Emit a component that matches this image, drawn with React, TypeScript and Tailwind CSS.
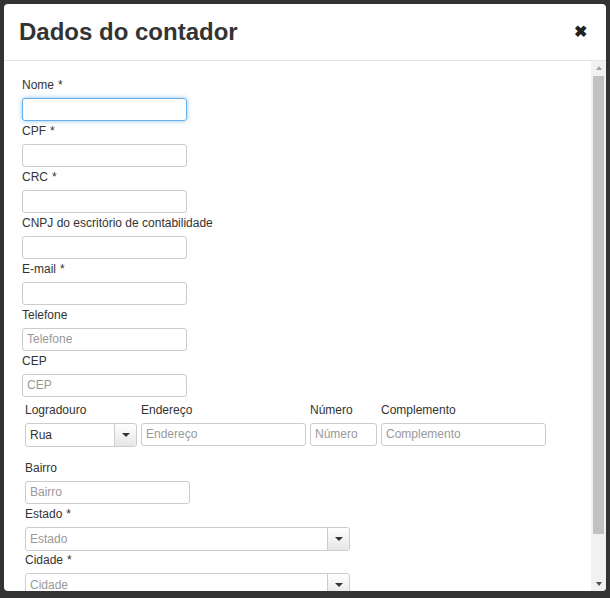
const font = { fontFamily: '"Liberation Sans", Arial, sans-serif' }

function Label({ text, req }: { text: string; req?: boolean }) {
  return (
    <div className="h-[23px] pt-[3px] text-[12px] leading-[14px] text-[#333]">
      {text}
      {req && <span className="ml-[4px]">*</span>}
    </div>
  )
}

function Input({ ph, w = 'w-[165px]', focus }: { ph?: string; w?: string; focus?: boolean }) {
  return (
    <div
      className={`h-[23px] ${w} rounded-[3px] border bg-white px-[4px] text-[12px] leading-[21px] text-[#999] ${
        focus ? 'border-[#66afe9] shadow-[0_0_5px_rgba(102,175,233,0.7)]' : 'border-[#ccc]'
      }`}
    >
      {ph}
    </div>
  )
}

function Caret() {
  return <div className="h-0 w-0 border-x-[4px] border-t-[4px] border-x-transparent border-t-[#333]" />
}

function Select({ value, ph, w }: { value?: string; ph?: string; w: string }) {
  return (
    <div className={`flex h-[24px] ${w} rounded-[3px] border border-[#ccc] bg-white text-[12px]`}>
      <div className={`flex-1 px-[4px] leading-[22px] ${value ? 'text-[#333]' : 'text-[#999]'}`}>{value ?? ph}</div>
      <div className="flex w-[22px] items-center justify-center rounded-r-[3px] border-l border-[#ccc] bg-gradient-to-b from-white to-[#e6e6e6]">
        <Caret />
      </div>
    </div>
  )
}

function Field({ label, req, ph, focus }: { label: string; req?: boolean; ph?: string; focus?: boolean }) {
  return (
    <div>
      <Label text={label} req={req} />
      <Input ph={ph} focus={focus} />
    </div>
  )
}

export default function App() {
  return (
    <div className="h-[598px] w-[610px] bg-[#333] p-[4px]" style={font}>
      <div className="flex h-[587px] flex-col overflow-hidden rounded-[4px] bg-white">
        <div className="flex h-[57px] items-center justify-between border-b border-[#e5e5e5] px-[15px]">
          <h1 className="text-[24px] font-bold text-[#333]">Dados do contador</h1>
          <span className="mr-[4px] text-[16px] font-bold text-[#222]">✖</span>
        </div>
        <div className="flex flex-1 overflow-hidden">
          <div className="flex-1 pl-[18px] pt-[14px]">
            <div className="flex flex-col gap-[0px] [&>div]:h-[46px]">
              <Field label="Nome" req focus />
              <Field label="CPF" req />
              <Field label="CRC" req />
              <Field label="CNPJ do escritório de contabilidade" />
              <Field label="E-mail" req />
              <Field label="Telefone" ph="Telefone" />
              <Field label="CEP" ph="CEP" />
            </div>
            <div className="ml-[3px] mt-[3px] flex gap-[4px]">
              <div>
                <Label text="Logradouro" />
                <Select value="Rua" w="w-[112px]" />
              </div>
              <div>
                <Label text="Endereço" />
                <Input ph="Endereço" />
              </div>
              <div>
                <Label text="Número" />
                <Input ph="Número" w="w-[67px]" />
              </div>
              <div>
                <Label text="Complemento" />
                <Input ph="Complemento" />
              </div>
            </div>
            <div className="ml-[3px] mt-[11px] [&>div]:h-[46px]">
              <Field label="Bairro" ph="Bairro" />
              <div>
                <Label text="Estado" req />
                <Select ph="Estado" w="w-[325px]" />
              </div>
              <div>
                <Label text="Cidade" req />
                <Select ph="Cidade" w="w-[325px]" />
              </div>
            </div>
          </div>
          <div className="flex w-[15px] flex-col items-center bg-[#f1f1f1]">
            <div className="mt-[5px] h-0 w-0 border-x-[3px] border-b-[4px] border-x-transparent border-b-[#a3a3a3]" />
            <div className="mt-[6px] h-[458px] w-[11px] bg-[#c1c1c1]" />
            <div className="flex-1" />
            <div className="mb-[5px] h-0 w-0 border-x-[3px] border-t-[4px] border-x-transparent border-t-[#505050]" />
          </div>
        </div>
      </div>
    </div>
  )
}
